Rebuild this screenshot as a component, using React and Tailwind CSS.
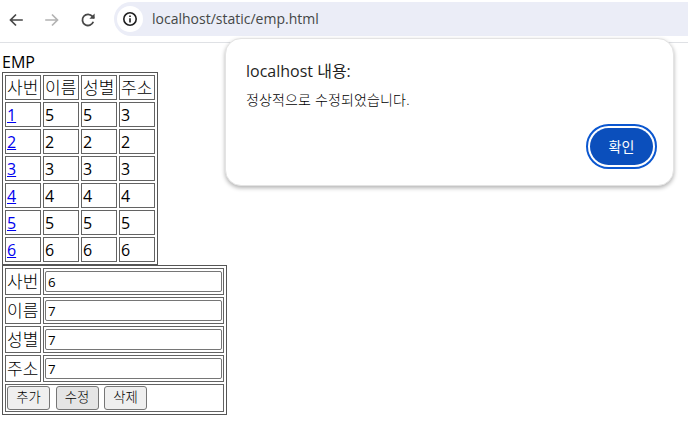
import React from "react";

const td = "border border-[#636363] p-0 pl-[1px] text-left align-middle h-[25px] w-[36px]";
const rows = [[1,5,5,3],[2,2,2,2],[3,3,3,3],[4,4,4,4],[5,5,5,5],[6,6,6,6]];

function Back({ color, flip }) {
  return (
    <svg width="16" height="16" viewBox="0 0 16 16" fill="none" stroke={color} strokeWidth="1.7" style={flip ? { transform: "scaleX(-1)" } : undefined}>
      <path d="M14.8 8H2.5M8 2.5 2.5 8 8 13.5" />
    </svg>
  );
}

function Ko({ children }) {
  return <span className="text-[17px] font-light tracking-[0.2px]">{children}</span>;
}

export default function App() {
  return (
    <div className="relative w-[688px] h-[422px] overflow-hidden bg-white text-black text-[16px] leading-[18px]" style={{ fontFamily: '"Open Sans", "Noto Sans CJK KR", sans-serif' }}>
      <div className="flex items-center h-[43px] border-b border-[#dfe1e5] bg-white">
        <div className="flex items-center gap-[20px] pl-[8px] w-[114px] -mt-[3px]">
          <Back color="#474747" />
          <Back color="#b3b3b3" flip />
          <svg width="16" height="16" viewBox="0 0 16 16" fill="none" stroke="#474747" strokeWidth="1.8">
            <path d="M13.3 9.8A5.6 5.6 0 1 1 12.4 4.4L14 6" />
            <path d="M14.6 1.6V6.8H9.4" fill="#474747" stroke="none" />
          </svg>
        </div>
        <div className="flex items-center flex-1 h-[34px] -mt-[5px] rounded-l-full bg-[#ebedf7]">
          <span className="flex items-center justify-center w-[26px] h-[26px] ml-[3px] rounded-full bg-white">
            <svg width="16" height="16" viewBox="0 0 16 16" fill="none" stroke="#1f1f1f" strokeWidth="1.6">
              <circle cx="8" cy="8" r="6.2" />
              <path d="M8 7.2V11.6M8 4.4V6" />
            </svg>
          </span>
          <span className="ml-[9px] text-[14px] text-[#444746]">localhost/static/emp.html</span>
        </div>
      </div>

      <div className="pl-[2px] pt-[9px]">
        <div className="h-[20px] leading-[20px]">EMP</div>
        <table className="border border-[#555555] border-separate border-spacing-[2px]">
          <tbody>
            <tr>
              {["사번","이름","성별","주소"].map((t) => <td key={t} className={td + " whitespace-nowrap"}><Ko>{t}</Ko></td>)}
            </tr>
            {rows.map((r) => (
              <tr key={r[0]}>
                <td className={td}><a href="#" className="text-[#0000ee] underline">{r[0]}</a></td>
                <td className={td}>{r[1]}</td>
                <td className={td}>{r[2]}</td>
                <td className={td}>{r[3]}</td>
              </tr>
            ))}
          </tbody>
        </table>
        <table className="border border-[#555555] border-separate border-spacing-[2px]">
          <tbody>
            {[["사번","6"],["이름","7"],["성별","7"],["주소","7"]].map(([l,v]) => (
              <tr key={l}>
                <td className="border border-[#636363] p-0 pl-[1px] h-[27px] w-[36px] whitespace-nowrap"><Ko>{l}</Ko></td>
                <td className="border border-[#636363] p-[1px]">
                  <input readOnly value={v} className="block w-[177px] h-[21px] border border-[#767676] rounded-[2px] px-[2px] text-[13.33px] text-black bg-white outline-none" />
                </td>
              </tr>
            ))}
            <tr>
              <td colSpan={2} className="border border-[#636363] p-[1px] h-[27px]">
                <div className="flex gap-[5.5px]">
                  {["추가","수정","삭제"].map((t) => (
                    <button key={t} className={"w-[43px] h-[24px] border border-[#767676] rounded-[3px] text-[13.33px] font-light leading-none " + (t === "수정" ? "bg-[#e5e5e5]" : "bg-[#efefef]")}>{t}</button>
                  ))}
                </div>
              </td>
            </tr>
          </tbody>
        </table>
      </div>

      <div className="absolute left-[225px] top-[38px] w-[449px] h-[148px] rounded-[16px] bg-white border border-[#e3e3e3] shadow-[0_2px_4px_rgba(0,0,0,0.3)]">
        <div className="pl-[20px] pt-[22px] text-[16px] leading-[20px] text-[#1f1f1f]">localhost 내용:</div>
        <div className="pl-[20px] pt-[10px] text-[14px] leading-[18px] tracking-[0.15px] text-black font-light">정상적으로 수정되었습니다.</div>
        <div className="absolute right-[16px] bottom-[16px] flex items-center justify-center w-[71px] h-[45px] rounded-full border-2 border-[#0b57d0]">
          <button className="w-[63px] h-[37px] rounded-full bg-[#0b4fbc] text-white text-[14px]">확인</button>
        </div>
      </div>
    </div>
  );
}
